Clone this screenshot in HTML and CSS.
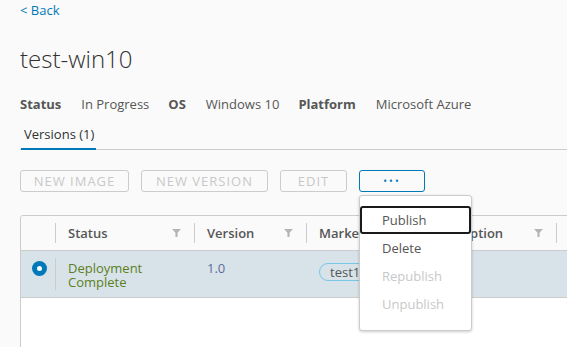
FILE: index.html
```html
<!DOCTYPE html>
<html lang="en">
<head>
    <meta charset="UTF-8">
    <title>test-win10</title>
    <link rel="stylesheet" href="styles.css">
</head>
<body>
<div class="page">
    <a class="back" href="#">&lt; Back</a>
    <h1 class="title">test-win10</h1>

    <div class="meta">
        <span class="meta-label">Status</span>
        <span class="meta-value">In Progress</span>
        <span class="meta-label">OS</span>
        <span class="meta-value">Windows 10</span>
        <span class="meta-label">Platform</span>
        <span class="meta-value">Microsoft Azure</span>
    </div>

    <div class="tabs">
        <div class="tab active">Versions (1)</div>
    </div>

    <div class="toolbar">
        <button class="btn btn-image" disabled>New Image</button>
        <button class="btn btn-version" disabled>New Version</button>
        <button class="btn btn-edit" disabled>Edit</button>
        <div class="more">
            <button class="btn btn-more">&bull;&bull;&bull;</button>
            <div class="menu">
                <div class="menu-item focused">Publish</div>
                <div class="menu-item">Delete</div>
                <div class="menu-item disabled">Republish</div>
                <div class="menu-item disabled">Unpublish</div>
            </div>
        </div>
    </div>

    <div class="grid">
        <div class="grid-head">
            <div class="cell select-cell"><span class="sep"></span></div>
            <div class="cell">Status
                <svg class="filter" viewBox="0 0 10 9"><path d="M0 0h10L6.2 4.2V9H3.8V4.2z"/></svg>
                <span class="sep"></span></div>
            <div class="cell">Version
                <svg class="filter" viewBox="0 0 10 9"><path d="M0 0h10L6.2 4.2V9H3.8V4.2z"/></svg>
                <span class="sep"></span></div>
            <div class="cell">Marketplace
                <svg class="filter" viewBox="0 0 10 9"><path d="M0 0h10L6.2 4.2V9H3.8V4.2z"/></svg>
                <span class="sep"></span></div>
            <div class="cell">Description
                <svg class="filter" viewBox="0 0 10 9"><path d="M0 0h10L6.2 4.2V9H3.8V4.2z"/></svg>
                <span class="sep"></span></div>
            <div class="cell"></div>
        </div>
        <div class="grid-row selected">
            <div class="cell select-cell"><span class="radio"></span><span class="sep"></span></div>
            <div class="cell status-ok">Deployment<br>Complete</div>
            <div class="cell version">1.0</div>
            <div class="cell"><span class="tag">test1</span></div>
            <div class="cell"></div>
            <div class="cell"></div>
        </div>
    </div>
</div>
</body>
</html>
```

FILE: styles.css
```css
:root {
    --blue: #0079b8;
    --text: #565656;
    --border: #cccccc;
}

html, body {
    overflow: hidden;
}

body {
    margin: 0;
    background: #fafafa;
    font-family: 'Open Sans', sans-serif;
    font-size: 13px;
    color: var(--text);
}

.page {
    padding: 2px 0 0 20px;
}

.back {
    display: block;
    color: var(--blue);
    text-decoration: none;
    line-height: 16px;
}

.title {
    margin: 27px 0 0;
    font-size: 24px;
    font-weight: 300;
    line-height: 28px;
    color: #313131;
}

.meta {
    display: flex;
    margin-top: 23px;
    line-height: 16px;
}

.meta-label {
    font-weight: 700;
    margin-right: 20px;
}

.meta-value {
    margin-right: 19px;
}

.tabs {
    display: flex;
    margin-top: 8px;
    border-bottom: 1px solid var(--border);
}

.tab {
    padding: 0 2px 0 3px;
    line-height: 28px;
    color: #313131;
}

.tab.active {
    border-bottom: 2px solid var(--blue);
    margin-bottom: -1px;
    margin-left: 1px;
}

.toolbar {
    display: flex;
    gap: 12px;
    margin-top: 20px;
}

.btn {
    box-sizing: border-box;
    height: 22px;
    padding: 0;
    border: 1px solid var(--border);
    border-radius: 3px;
    background: transparent;
    font-family: inherit;
    font-size: 13px;
    letter-spacing: 1px;
    text-transform: uppercase;
    color: #c8c8c8;
}

.btn-image {
    width: 109px;
}

.btn-version {
    width: 127px;
}

.btn-edit {
    width: 67px;
}

.more {
    position: relative;
}

.btn-more {
    width: 66px;
    border-color: var(--blue);
    color: var(--blue);
    font-size: 10px;
    letter-spacing: 2px;
}

.menu {
    position: absolute;
    top: 25px;
    left: 0;
    width: 111px;
    padding: 10px 0 12px;
    background: #fff;
    border: 1px solid var(--border);
    border-radius: 3px;
    box-shadow: 0 1px 3px rgba(0, 0, 0, 0.2);
    z-index: 10;
}

.menu-item {
    height: 28px;
    line-height: 28px;
    padding-left: 22px;
    color: var(--text);
}

.menu-item.focused {
    box-sizing: border-box;
    border: 2px solid #1a1a1a;
    border-radius: 3px;
    line-height: 24px;
    padding-left: 20px;
}

.menu-item.disabled {
    color: #c8c8c8;
}

.grid {
    margin-top: 23px;
    width: 640px;
    height: 140px;
    background: #fff;
    border: 1px solid var(--border);
    border-radius: 3px 0 0 0;
}

.grid-head, .grid-row {
    display: grid;
    grid-template-columns: 35px 139px 112px 112px 138px 1fr;
}

.grid-head {
    height: 34px;
    background: #fafafa;
    border-bottom: 1px solid var(--border);
    border-radius: 3px 0 0 0;
    font-weight: 600;
}

.grid-head .cell {
    display: flex;
    align-items: center;
    position: relative;
    padding: 0 12px;
}

.sep {
    position: absolute;
    right: 0;
    top: 7px;
    bottom: 7px;
    width: 1px;
    background: var(--border);
}

.filter {
    margin-left: auto;
    margin-right: 2px;
    width: 9px;
    height: 8px;
    fill: #b5b5b5;
}

.grid-row {
    height: 46px;
    border-bottom: 1px solid var(--border);
}

.grid-row.selected {
    background: #d8e3e9;
}

.grid-row .cell {
    position: relative;
    padding: 10px 12px 0;
    line-height: 14px;
}

.select-cell {
    padding: 0;
}

.grid-row .select-cell {
    padding: 0;
}

.radio {
    position: absolute;
    left: 11px;
    top: 10px;
    width: 15px;
    height: 15px;
    border-radius: 50%;
    background: var(--blue);
}

.radio::after {
    content: '';
    position: absolute;
    left: 5px;
    top: 5px;
    width: 5px;
    height: 5px;
    border-radius: 50%;
    background: #fff;
}

.status-ok {
    color: #5b7f1c;
}

.version {
    color: #5a6e9c;
}

.tag {
    display: inline-block;
    margin-top: 2px;
    padding: 0 10px;
    line-height: 16px;
    border: 1px solid #79c6e6;
    border-radius: 9px;
    color: var(--text);
}
```
